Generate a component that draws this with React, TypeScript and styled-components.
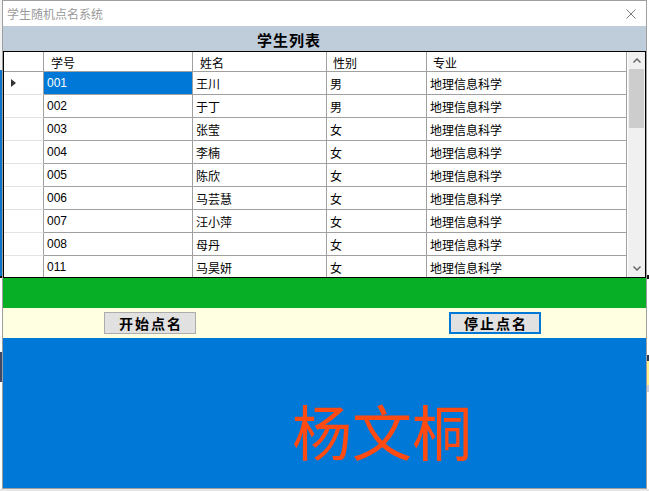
import styled, { createGlobalStyle } from "styled-components";

const GlobalStyle = createGlobalStyle`
  html, body {
    margin: 0;
    padding: 0;
    background: #ffffff;
  }
  body {
    font-family: "Liberation Sans", "Noto Sans CJK SC", sans-serif;
  }
`;

const cjk = `"Noto Sans CJK SC", "Liberation Sans", sans-serif`;

const Desktop = styled.div`
  display: flex;
  width: 649px;
  height: 491px;
  background: #e6e6e6;
  overflow: hidden;
`;

const EdgeStrip = styled.div<{ $side: "left" | "right" }>`
  width: 2px;
  height: 489px;
  flex: none;
  background: ${(p) =>
    p.$side === "left"
      ? `linear-gradient(to bottom, #f2f2f2 0 70px, #0a72c8 70px 276px, #111 276px 278px,
         #ffffff 278px 352px, #3f4b66 352px 382px, #ffffff 382px)`
      : `linear-gradient(to bottom, #ffffff 0 275px, #111 275px 279px, #ffffff 279px 355px,
         #2b3a55 355px 361px, #fff08a 361px 385px, #c9d1e1 385px 392px, #ffffff 392px)`};
`;

const Window = styled.div`
  width: 643px;
  height: 487px;
  flex: none;
  border: 1px solid #9f9f9f;
  background: #ffffff;
  display: flex;
  flex-direction: column;
`;

const TitleBar = styled.div`
  height: 25px;
  flex: none;
  display: flex;
  align-items: center;
  justify-content: space-between;
  padding: 0 10px 0 4px;
  background: #ffffff;
`;

const TitleText = styled.span`
  font-family: ${cjk};
  font-size: 12px;
  color: #9a9a9a;
`;

const CloseGlyph = styled.svg`
  width: 10px;
  height: 10px;
  display: block;
`;

const SectionBand = styled.div`
  height: 25px;
  flex: none;
  background: #bfcddb;
  display: flex;
  align-items: center;
  padding: 2px 0 0 254px;
  box-sizing: border-box;
`;

const SectionTitle = styled.span`
  font-family: ${cjk};
  font-size: 15px;
  font-weight: 700;
  letter-spacing: 1px;
  color: #000;
`;

const GridFrame = styled.div`
  height: 227px;
  flex: none;
  box-sizing: border-box;
  border: 1px solid #000;
  display: flex;
  background: #fff;
`;

const GridTable = styled.div`
  flex: 1;
  overflow: hidden;
  display: flex;
  flex-direction: column;
`;

const columns = "40px 149px 134px 100px 200px";

const HeaderRow = styled.div`
  display: grid;
  grid-template-columns: ${columns};
  height: 20px;
  flex: none;
`;

const HeaderCell = styled.div`
  box-sizing: border-box;
  border-right: 1px solid #a0a0a0;
  border-bottom: 1px solid #a0a0a0;
  padding: 2px 0 0 7px;
  font-family: ${cjk};
  font-size: 12px;
  line-height: 17px;
  color: #000;
`;

const DataRow = styled.div`
  display: grid;
  grid-template-columns: ${columns};
  height: 23px;
  flex: none;
`;

const RowHead = styled.div`
  box-sizing: border-box;
  border-right: 1px solid #a0a0a0;
  border-bottom: 1px solid #e3e3e3;
  display: flex;
  align-items: center;
  padding-left: 7px;
`;

const Cell = styled.div<{ $selected?: boolean }>`
  box-sizing: border-box;
  border-right: 1px solid #a0a0a0;
  border-bottom: 1px solid #a0a0a0;
  padding-left: 3px;
  display: flex;
  align-items: center;
  font-size: 12px;
  white-space: nowrap;
  color: ${(p) => (p.$selected ? "#ffffff" : "#000000")};
  background: ${(p) => (p.$selected ? "#0078d7" : "#ffffff")};
`;

const ScrollBar = styled.div`
  width: 17px;
  flex: none;
  background: #f0f0f0;
  display: flex;
  flex-direction: column;
  align-items: center;
`;

const ScrollArrow = styled.div`
  height: 17px;
  width: 17px;
  flex: none;
  display: flex;
  align-items: center;
  justify-content: center;
`;

const ScrollThumb = styled.div`
  width: 15px;
  height: 59px;
  flex: none;
  background: #cdcdcd;
`;

const ScrollTrack = styled.div`
  flex: 1;
`;

const GreenBand = styled.div`
  height: 30px;
  flex: none;
  background: #06af25;
`;

const ButtonBand = styled.div`
  height: 30px;
  flex: none;
  background: #ffffe1;
  display: flex;
  align-items: center;
  padding-left: 101px;
  gap: 253px;
`;

const ActionButton = styled.button<{ $focused?: boolean }>`
  width: 92px;
  height: 22px;
  box-sizing: border-box;
  padding: 0 0 0 2px;
  margin: 0;
  background: #e1e1e1;
  border: ${(p) => (p.$focused ? "2px solid #0078d7" : "1px solid #adadad")};
  font-family: ${cjk};
  font-size: 14px;
  font-weight: 700;
  letter-spacing: 2px;
  line-height: 1;
  color: #000;
  display: flex;
  align-items: center;
  justify-content: center;
`;

const ResultPanel = styled.div`
  height: 150px;
  flex: none;
  background: #0078d7;
  box-sizing: border-box;
  padding: 62px 0 0 289px;
`;

const ResultName = styled.div`
  font-family: ${cjk};
  font-size: 60px;
  line-height: 1;
  color: #ff4a12;
`;

const students = [
  ["001", "王川", "男"],
  ["002", "于丁", "男"],
  ["003", "张莹", "女"],
  ["004", "李楠", "女"],
  ["005", "陈欣", "女"],
  ["006", "马芸慧", "女"],
  ["007", "汪小萍", "女"],
  ["008", "母丹", "女"],
  ["011", "马昊妍", "女"],
];

function Chevron({ up }: { up?: boolean }) {
  return (
    <svg width="8" height="5" viewBox="0 0 8 5">
      <path
        d={up ? "M0.5 4.5 L4 1 L7.5 4.5" : "M0.5 0.5 L4 4 L7.5 0.5"}
        fill="none"
        stroke="#606060"
        strokeWidth="1.4"
      />
    </svg>
  );
}

export default function App() {
  return (
    <>
      <GlobalStyle />
      <Desktop>
        <EdgeStrip $side="left" />
        <Window>
          <TitleBar>
            <TitleText>学生随机点名系统</TitleText>
            <CloseGlyph viewBox="0 0 10 10">
              <path d="M0.5 0.5 L9.5 9.5 M9.5 0.5 L0.5 9.5" stroke="#7a7a7a" strokeWidth="1" />
            </CloseGlyph>
          </TitleBar>

          <SectionBand>
            <SectionTitle>学生列表</SectionTitle>
          </SectionBand>

          <GridFrame>
            <GridTable>
              <HeaderRow>
                <HeaderCell />
                <HeaderCell>学号</HeaderCell>
                <HeaderCell>姓名</HeaderCell>
                <HeaderCell style={{ paddingLeft: 6 }}>性别</HeaderCell>
                <HeaderCell style={{ paddingLeft: 6 }}>专业</HeaderCell>
              </HeaderRow>
              {students.map(([id, name, sex], i) => (
                <DataRow key={id}>
                  <RowHead>
                    {i === 0 && (
                      <svg width="5" height="8" viewBox="0 0 5 8">
                        <path d="M0 0 L5 4 L0 8 Z" fill="#333" />
                      </svg>
                    )}
                  </RowHead>
                  <Cell $selected={i === 0}>{id}</Cell>
                  <Cell>{name}</Cell>
                  <Cell>{sex}</Cell>
                  <Cell>地理信息科学</Cell>
                </DataRow>
              ))}
            </GridTable>
            <ScrollBar>
              <ScrollArrow>
                <Chevron up />
              </ScrollArrow>
              <ScrollThumb />
              <ScrollTrack />
              <ScrollArrow>
                <Chevron />
              </ScrollArrow>
            </ScrollBar>
          </GridFrame>

          <GreenBand />

          <ButtonBand>
            <ActionButton>开始点名</ActionButton>
            <ActionButton $focused>停止点名</ActionButton>
          </ButtonBand>

          <ResultPanel>
            <ResultName>杨文桐</ResultName>
          </ResultPanel>
        </Window>
        <EdgeStrip $side="right" />
      </Desktop>
    </>
  );
}
